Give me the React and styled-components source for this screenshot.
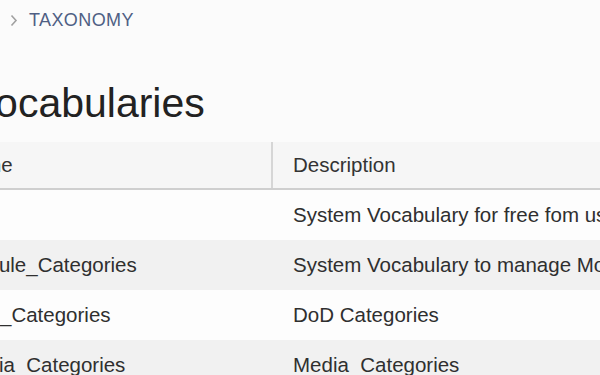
import React from "react";
import styled, { createGlobalStyle } from "styled-components";

const GlobalStyle = createGlobalStyle`
  html, body {
    margin: 0;
    padding: 0;
    background: #fbfbfb;
    overflow: hidden;
  }
  body {
    font-family: "Liberation Sans", Arial, sans-serif;
    color: #333;
  }
`;

const Page = styled.div`
  margin-left: -61px;
  padding-top: 8px;
  width: 900px;
`;

const Breadcrumb = styled.nav`
  display: flex;
  align-items: center;
  gap: 11px;
  height: 24px;
  padding-left: 71px;
  font-size: 18px;
  line-height: 24px;
`;

const Chevron = styled.span`
  display: inline-flex;
  color: #a0a0a0;
`;

const Crumb = styled.span`
  color: #4f5f84;
  text-transform: uppercase;
  letter-spacing: 0.4px;
`;

const Title = styled.h1`
  margin: 47px 0 0 31px;
  font-size: 41px;
  line-height: 48px;
  font-weight: normal;
  color: #222;
`;

const Table = styled.table`
  margin-top: 15px;
  border-collapse: collapse;
  width: 100%;
  font-size: 20.5px;
`;

const HeadCell = styled.th`
  height: 46px;
  padding: 0 20px 0 ${(p) => (p.$divider ? "20px" : "19px")};
  text-align: left;
  font-weight: normal;
  color: #333;
  background: #f6f6f6;
  border-bottom: 2px solid #cfcfcf;
  width: ${(p) => p.$width || "auto"};
  border-left: ${(p) => (p.$divider ? "2px solid #d6d6d6" : "none")};
`;

const Row = styled.tr`
  background: ${(p) => (p.$striped ? "#f1f1f1" : "#fdfdfd")};
`;

const Cell = styled.td`
  height: 50px;
  padding: 0 20px 0 ${(p) => (p.$divider ? "20px" : "20px")};
  white-space: nowrap;
  color: #2f2f2f;
  border-left: ${(p) => (p.$divider ? "2px solid transparent" : "none")};
`;

const rows = [
  { name: "Tag", description: "System Vocabulary for free fom user tags" },
  { name: "Module_Categories", description: "System Vocabulary to manage Module Categories" },
  { name: "DoD_Categories", description: "DoD Categories" },
  { name: "Media_Categories", description: "Media_Categories" },
];

export default function App() {
  return (
    <Page>
      <GlobalStyle />
      <Breadcrumb>
        <Chevron>
          <svg width="8" height="13" viewBox="0 0 8 13" fill="none">
            <path d="M1.5 1.5L6 6.5L1.5 11.5" stroke="currentColor" strokeWidth="1.6" />
          </svg>
        </Chevron>
        <Crumb>Taxonomy</Crumb>
      </Breadcrumb>
      <Title>Vocabularies</Title>
      <Table>
        <thead>
          <tr>
            <HeadCell $width="293px">Name</HeadCell>
            <HeadCell $divider>Description</HeadCell>
          </tr>
        </thead>
        <tbody>
          {rows.map((r, i) => (
            <Row key={r.name} $striped={i % 2 === 1}>
              <Cell>{r.name}</Cell>
              <Cell $divider>{r.description}</Cell>
            </Row>
          ))}
        </tbody>
      </Table>
    </Page>
  );
}
